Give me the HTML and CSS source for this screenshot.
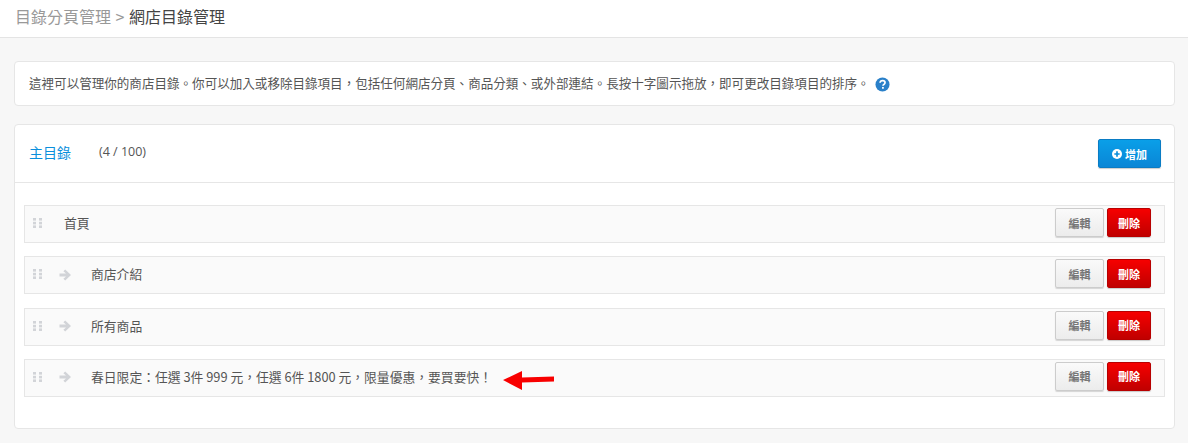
FILE: index.html
```html
<!DOCTYPE html>
<html lang="zh-Hant">
<head>
    <meta charset="UTF-8">
    <meta name="viewport" content="width=device-width, initial-scale=1.0">
    <title>網店目錄管理</title>
    <link rel="stylesheet" href="styles.css">
</head>
<body>
    <div class="topbar">
        <h1><span class="crumb">目錄分頁管理 &gt;</span> 網店目錄管理</h1>
    </div>

    <div class="content">
        <div class="card notice">
            <span class="notice-text">這裡可以管理你的商店目錄。你可以加入或移除目錄項目，包括任何網店分頁、商品分類、或外部連結。長按十字圖示拖放，即可更改目錄項目的排序。</span>
            <svg class="help" viewBox="0 0 16 16" width="15" height="15">
                <circle cx="8" cy="8" r="7.5" fill="#2a80c9"/>
                <path d="M5.4 6.2C5.5 4.7 6.6 3.9 8.1 3.9c1.5 0 2.6.9 2.6 2.1 0 1-.6 1.5-1.3 2-.6.4-.9.7-.9 1.4" fill="none" stroke="#fff" stroke-width="1.8"/>
                <rect x="7.5" y="10.6" width="1.9" height="1.9" fill="#fff"/>
            </svg>
        </div>

        <div class="card menu">
            <div class="menu-head">
                <div class="menu-title">主目錄</div>
                <div class="menu-count">(4 / 100)</div>
                <button class="btn btn-add">
                    <svg viewBox="0 0 12 12" width="10" height="10">
                        <circle cx="6" cy="6" r="6" fill="#fff"/>
                        <path d="M6 2.8v6.4M2.8 6h6.4" stroke="#0a8fdc" stroke-width="2"/>
                    </svg>
                    增加
                </button>
            </div>
            <div class="menu-body">
                <div class="row">
                    <svg class="grip" viewBox="0 0 10 10" width="10" height="10"><use href="#dots"/></svg>
                    <span class="row-name row-top">首頁</span>
                    <button class="btn btn-edit">編輯</button>
                    <button class="btn btn-del">刪除</button>
                </div>
                <div class="row">
                    <svg class="grip" viewBox="0 0 10 10" width="10" height="10"><use href="#dots"/></svg>
                    <svg class="indent" viewBox="0 0 12 12" width="12" height="12"><use href="#arrow"/></svg>
                    <span class="row-name">商店介紹</span>
                    <button class="btn btn-edit">編輯</button>
                    <button class="btn btn-del">刪除</button>
                </div>
                <div class="row">
                    <svg class="grip" viewBox="0 0 10 10" width="10" height="10"><use href="#dots"/></svg>
                    <svg class="indent" viewBox="0 0 12 12" width="12" height="12"><use href="#arrow"/></svg>
                    <span class="row-name">所有商品</span>
                    <button class="btn btn-edit">編輯</button>
                    <button class="btn btn-del">刪除</button>
                </div>
                <div class="row">
                    <svg class="grip" viewBox="0 0 10 10" width="10" height="10"><use href="#dots"/></svg>
                    <svg class="indent" viewBox="0 0 12 12" width="12" height="12"><use href="#arrow"/></svg>
                    <span class="row-name">春日限定：任選 3件 999 元，任選 6件 1800 元，限量優惠，要買要快！</span>
                    <svg class="red-arrow" viewBox="0 0 52 20" width="52" height="20">
                        <path d="M0 10 19 1v6.5l32-1v5l-32 1V20z" fill="#f80000"/>
                    </svg>
                    <button class="btn btn-edit">編輯</button>
                    <button class="btn btn-del">刪除</button>
                </div>
            </div>
        </div>
    </div>

    <svg class="defs" width="0" height="0">
        <defs>
            <g id="dots" fill="#d2d4d8">
                <rect x="0" y="0" width="3" height="2.6"/><rect x="6" y="0" width="3" height="2.6"/>
                <rect x="0" y="3.8" width="3" height="2.6"/><rect x="6" y="3.8" width="3" height="2.6"/>
                <rect x="0" y="7.4" width="3" height="2.6"/><rect x="6" y="7.4" width="3" height="2.6"/>
            </g>
            <path id="arrow" d="M6.2.5 12 6l-5.8 5.5-1.8-1.7 2.6-2.4H.5V4.6h6.5L4.4 2.2z" fill="#d2d4d8"/>
        </defs>
    </svg>
</body>
</html>
```

FILE: styles.css
```css
body { margin: 0; background: #f7f7f7; color: #555; font-family: "Noto Sans CJK TC", "Open Sans", sans-serif; font-size: 13px; overflow: hidden; }
.topbar { background: #fff; height: 37px; border-bottom: 1px solid #e4e4e4; padding-left: 15px; }
.topbar h1 { margin: 0; font-size: 16px; font-weight: 400; line-height: 33px; color: #444; word-spacing: 1px; }
.crumb { color: #999; }
.content { padding: 23px 13px 0 14px; }
.card { background: #fff; border: 1px solid #e6e6e6; border-radius: 4px; }
.notice { height: 43px; margin-bottom: 18px; padding-left: 14px; display: flex; align-items: center; gap: 5px; box-sizing: content-box; }
.notice-text { font-size: 12.56px; margin-top: -2px; }
.help { flex: none; margin-top: 1px; }
.menu { height: 303px; }
.menu-head { height: 57px; border-bottom: 1px solid #e6e6e6; display: flex; align-items: center; padding: 0 13px 0 14px; }
.menu-title { color: #0a8fdc; font-size: 14px; width: 70px; margin-top: -3px; }
.menu-count { flex: 1; font-family: "Open Sans", sans-serif; font-size: 12.5px; margin-top: -4px; }
.menu-body { padding: 22px 9px 0; }
.row { height: 33px; margin-bottom: 13.33px; background: #fafafa; border: 1px solid #e6e6e6; display: flex; align-items: center; padding: 0 13px 3px 8px; gap: 3px; }
.grip { flex: none; margin-right: 13px; margin-top: 1px; }
.indent { flex: none; margin-right: 17px; margin-top: 2px; }
.row-name { font-size: 12.8px; color: #555; }
.row-top { margin-left: 5px; }
.red-arrow { flex: none; margin-left: 8px; margin-top: 7px; }
.btn { font-family: inherit; font-size: 11px; font-weight: 700; border-radius: 2px; cursor: pointer; padding: 0; box-sizing: border-box; }
.btn-add { width: 63px; height: 29px; color: #fff; background: linear-gradient(#0a9fe8, #0a86d6); border: 1px solid #0a7cc4; display: flex; align-items: center; justify-content: center; gap: 3px; box-shadow: 0 1px 1px rgba(0, 0, 0, .2); }
.btn-edit { width: 49px; height: 29px; margin-left: auto; color: #777; background: linear-gradient(#fafafa, #ececec); border: 1px solid #ccc; box-shadow: 0 1px 1px rgba(0, 0, 0, .15); }
.btn-del { width: 44px; height: 29px; color: #fff; background: linear-gradient(#f60000, #c00000); border: 1px solid #b80000; box-shadow: 0 1px 1px rgba(0, 0, 0, .2); }
.defs { position: absolute; }
```
